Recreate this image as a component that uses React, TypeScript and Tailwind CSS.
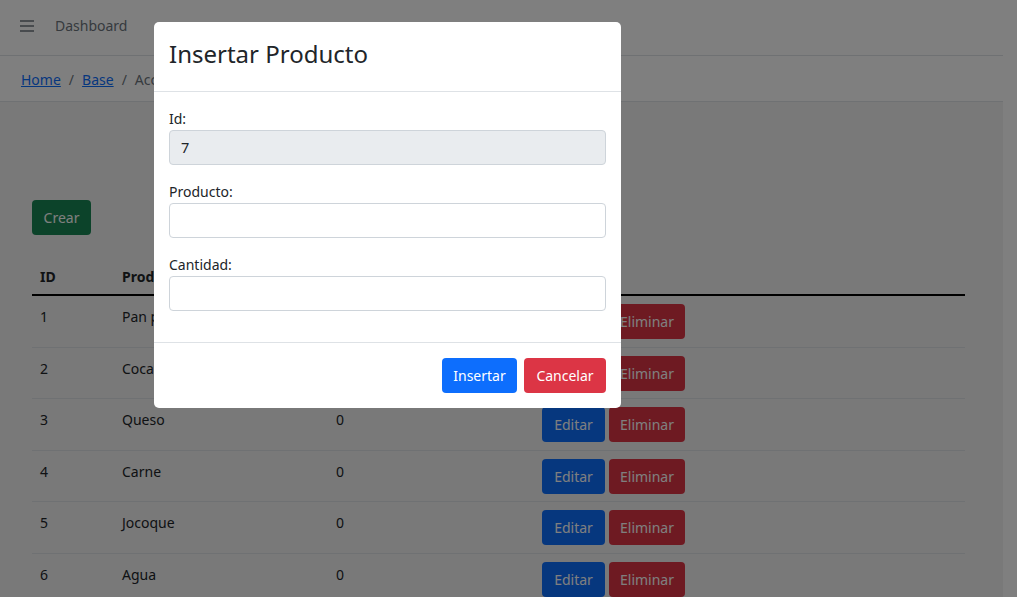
import React from "react";

const rows = [
  { id: 1, p: "Pan p", c: "0" },
  { id: 2, p: "Coca", c: "0" },
  { id: 3, p: "Queso", c: "0" },
  { id: 4, p: "Carne", c: "0" },
  { id: 5, p: "Jocoque", c: "0" },
  { id: 6, p: "Agua", c: "0" },
];

export default function App() {
  return (
    <div
      className="relative w-[1017px] h-[597px] overflow-hidden bg-white text-[#212529]"
      style={{ fontFamily: '"Noto Sans", "Open Sans", sans-serif' }}
    >
      <div className="w-[1003px] h-full flex flex-col">
        {/* navbar */}
        <div className="h-[56px] shrink-0 border-b border-[#dee2e6] flex items-center pl-[20px] pb-[4px]">
          <svg width="14" height="12" viewBox="0 0 14 12" className="text-[#6c757d]">
            <path d="M0 1h14M0 6h14M0 11h14" stroke="currentColor" strokeWidth="1.3" />
          </svg>
          <span className="ml-[21px] text-[14px] text-[#6c757d]">Dashboard</span>
        </div>
        {/* breadcrumb */}
        <div className="h-[46px] shrink-0 border-b border-[#dee2e6] flex items-center pl-[21px] pt-[2px] text-[14px]">
          <a className="text-[#0d6efd] underline">Home</a>
          <span className="px-[8px] text-[#6c757d]">/</span>
          <a className="text-[#0d6efd] underline">Base</a>
          <span className="px-[8px] text-[#6c757d]">/</span>
          <span className="text-[#6c757d]">Accesos</span>
        </div>
        {/* content */}
        <div className="flex-1 bg-[#f2f2f2] pl-[32px] pr-[38px]">
          <div className="h-[98px]" />
          <button className="h-[35px] w-[59px] rounded-[4px] bg-[#198754] text-white text-[14px]">Crear</button>
          <div className="mt-[24px]">
            <div className="grid grid-cols-[82px_214px_206px_1fr] h-[37px] border-b-2 border-black font-bold text-[14px] items-center">
              <div className="pl-[8px]">ID</div>
              <div className="pl-[8px]">Producto</div>
              <div className="pl-[8px]">Cantidad</div>
              <div className="pl-[8px]">Acciones</div>
            </div>
            {rows.map((r) => (
              <div
                key={r.id}
                className="grid grid-cols-[82px_214px_206px_1fr] h-[51.5px] border-b border-[#dee2e6] text-[14px] items-start"
              >
                <div className="pl-[8px] pt-[8px] leading-[26px]">{r.id}</div>
                <div className="pl-[8px] pt-[8px] leading-[26px]">{r.p}</div>
                <div className="pl-[8px] pt-[8px] leading-[26px]">{r.c}</div>
                <div className="pl-[8px] pt-[8px] flex gap-[4px]">
                  <button className="h-[35px] w-[63px] rounded-[4px] bg-[#0d6efd] text-white text-[14px]">Editar</button>
                  <button className="h-[35px] w-[76px] rounded-[4px] bg-[#dc3545] text-white text-[14px]">Eliminar</button>
                </div>
              </div>
            ))}
          </div>
        </div>
      </div>

      {/* backdrop */}
      <div className="absolute inset-0 bg-black/50" />

      {/* modal */}
      <div className="absolute left-[154px] top-[22px] w-[467px] bg-white rounded-[5px] flex flex-col">
        <div className="h-[70px] border-b border-[#dee2e6] flex items-center px-[15px] pb-[6px]">
          <h3 className="text-[24px] text-[#212529] leading-none">Insertar Producto</h3>
        </div>
        <div className="px-[15px] pt-[16px] pb-[31px] flex flex-col text-[14px]">
          <label className="h-[22px] leading-[22px]">Id:</label>
          <div className="h-[35px] rounded-[4px] border border-[#ced4da] bg-[#e9ecef] flex items-center px-[11px] text-[14.5px]">7</div>
          <label className="mt-[16px] h-[22px] leading-[22px]">Producto:</label>
          <div className="h-[35px] rounded-[4px] border border-[#ced4da] bg-white" />
          <label className="mt-[16px] h-[22px] leading-[22px]">Cantidad:</label>
          <div className="h-[35px] rounded-[4px] border border-[#ced4da] bg-white" />
        </div>
        <div className="border-t border-[#dee2e6] h-[66px] flex items-center justify-end gap-[7px] px-[15px]">
          <button className="h-[35px] w-[75px] rounded-[4px] bg-[#0d6efd] text-white text-[14px]">Insertar</button>
          <button className="h-[35px] w-[82px] rounded-[4px] bg-[#dc3545] text-white text-[14px]">Cancelar</button>
        </div>
      </div>
    </div>
  );
}
